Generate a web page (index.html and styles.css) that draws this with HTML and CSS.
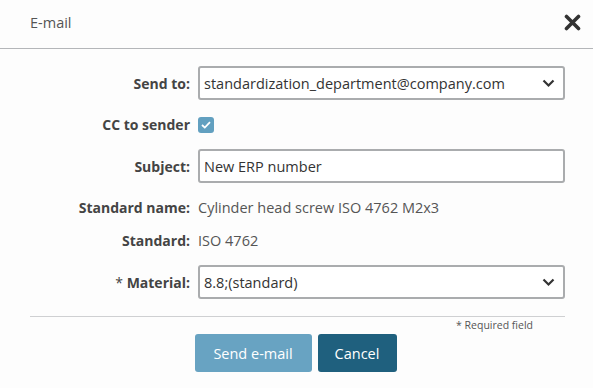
FILE: index.html
```html
<!DOCTYPE html>
<html lang="en">

<head>
  <meta charset="UTF-8">
  <title>E-mail</title>
  <link rel="stylesheet" href="styles.css">
</head>

<body>
  <div class="dialog">
    <!-- Header -->
    <div class="dialog-header">
      <span class="dialog-title">E-mail</span>
      <button type="button" class="close-btn" aria-label="Close">
        <svg width="17" height="17" viewBox="0 0 17 17">
          <path d="M2.5 2.5 L14.5 14.5 M14.5 2.5 L2.5 14.5" stroke="#333" stroke-width="3.6" stroke-linecap="round"/>
        </svg>
      </button>
    </div>

    <!-- Form -->
    <form class="mail-form">
      <label class="field-label" for="sendTo">Send to:</label>
      <div class="select-box">
        <span id="sendTo">standardization_department@company.com</span>
        <svg class="chevron" width="13" height="9" viewBox="0 0 13 9">
          <path d="M1.5 1.5 L6.5 6.5 L11.5 1.5" fill="none" stroke="#333" stroke-width="2.2"/>
        </svg>
      </div>

      <span class="field-label">CC to sender</span>
      <div class="check-cell">
        <span class="checkbox">
          <svg width="10" height="8" viewBox="0 0 10 8">
            <path d="M1 4 L3.8 6.6 L9 1.2" fill="none" stroke="#fff" stroke-width="1.8"/>
          </svg>
        </span>
      </div>

      <label class="field-label" for="subject">Subject:</label>
      <input class="text-input" id="subject" type="text" value="New ERP number">

      <span class="field-label">Standard name:</span>
      <span class="field-value">Cylinder head screw ISO 4762 M2x3</span>

      <span class="field-label">Standard:</span>
      <span class="field-value">ISO 4762</span>

      <label class="field-label"><span class="req">* </span>Material:</label>
      <div class="select-box">
        <span>8.8;(standard)</span>
        <svg class="chevron" width="13" height="9" viewBox="0 0 13 9">
          <path d="M1.5 1.5 L6.5 6.5 L11.5 1.5" fill="none" stroke="#333" stroke-width="2.2"/>
        </svg>
      </div>
    </form>

    <!-- Footer -->
    <div class="dialog-footer">
      <div class="required-note">* Required field</div>
      <div class="actions">
        <button type="button" class="btn btn-send">Send e-mail</button>
        <button type="button" class="btn btn-cancel">Cancel</button>
      </div>
    </div>
  </div>
</body>

</html>
```

FILE: styles.css
```css
* {
  margin: 0;
  padding: 0;
  box-sizing: border-box;
  font-family: 'Open Sans', 'Noto Sans', sans-serif;
}

body {
  background-color: #fdfdfd;
  color: #444;
}

.dialog {
  width: 593px;
  height: 388px;
  background-color: #fdfdfd;
}

.dialog-header {
  height: 49px;
  display: flex;
  align-items: center;
  justify-content: space-between;
  padding: 0 12px 4px 30px;
  border-bottom: 1px solid #b4b6b9;
}

.dialog-title {
  font-size: 14.5px;
  color: #555;
}

.close-btn {
  background: none;
  border: none;
  display: flex;
  cursor: pointer;
}

.mail-form {
  display: grid;
  grid-template-columns: 190px 367px;
  grid-template-rows: 34px 17px 34px 17px 17px 34px;
  column-gap: 8px;
  row-gap: 16px;
  padding-top: 17px;
  align-items: center;
}

.field-label {
  text-align: right;
  font-size: 14px;
  font-weight: 700;
  color: #444;
  white-space: nowrap;
}

.field-label .req {
  font-weight: 400;
}

.field-value {
  font-size: 14.5px;
  color: #555;
  white-space: nowrap;
}

.select-box,
.text-input {
  height: 34px;
  border: 2px solid #aaacae;
  border-radius: 3px;
  background-color: #fff;
  font-size: 14.5px;
  color: #333;
  padding: 0 4px;
}

.select-box {
  display: flex;
  align-items: center;
  justify-content: space-between;
  padding-right: 8px;
  white-space: nowrap;
}

.chevron {
  flex-shrink: 0;
}

.text-input {
  width: 100%;
  outline: none;
}

.check-cell {
  display: flex;
  align-items: center;
}

.checkbox {
  width: 16px;
  height: 16px;
  border-radius: 3px;
  background-color: #62a0c0;
  display: flex;
  align-items: center;
  justify-content: center;
}

.dialog-footer {
  margin: 17px 28px 0 30px;
  border-top: 1px solid #cfd0d2;
}

.required-note {
  text-align: right;
  font-size: 10.5px;
  color: #555;
  padding: 1px 32px 0 0;
  line-height: 14px;
}

.actions {
  display: flex;
  justify-content: center;
  gap: 6px;
  margin-top: 2px;
  padding-right: 4px;
}

.btn {
  height: 38px;
  border: none;
  border-radius: 3px;
  color: #fff;
  font-size: 14.5px;
  cursor: pointer;
}

.btn-send {
  width: 117px;
  background-color: #68a3c2;
}

.btn-cancel {
  width: 79px;
  background-color: #1f607e;
}
```
